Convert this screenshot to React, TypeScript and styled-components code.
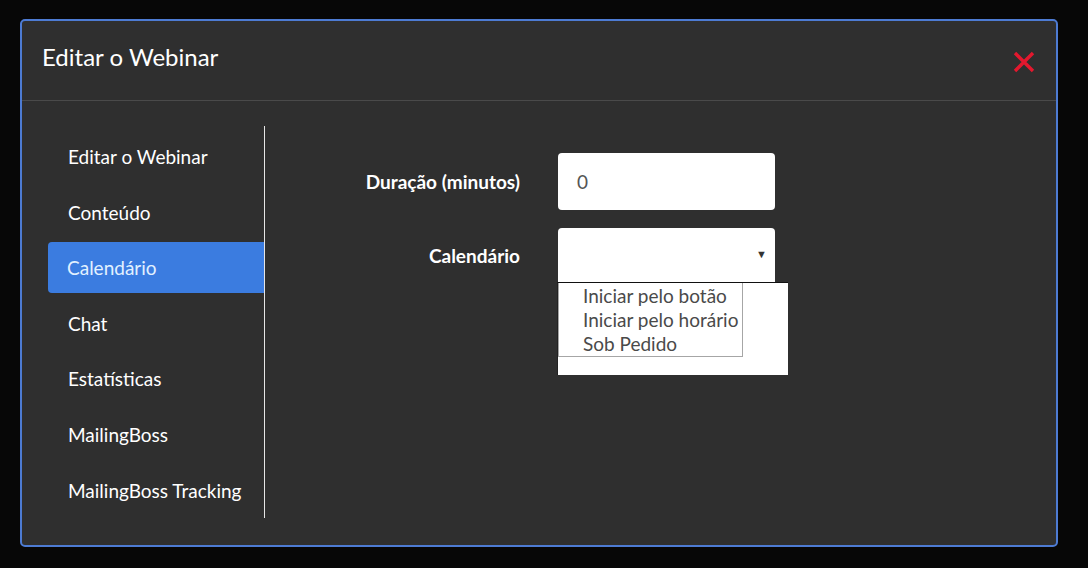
import React from "react";
import styled, { createGlobalStyle } from "styled-components";

const Global = createGlobalStyle`
  html, body { margin: 0; padding: 0; background: #070707; }
  body { font-family: Lato, "Noto Sans", sans-serif; }
  * { box-sizing: border-box; }
`;

const Page = styled.div`
  width: 1088px;
  height: 568px;
  padding: 19px 0 0 20px;
`;

const Modal = styled.div`
  width: 1038px;
  height: 528px;
  background: #2f2f2f;
  border: 2px solid #4d7bd3;
  border-radius: 5px;
  display: flex;
  flex-direction: column;
`;

const Header = styled.div`
  height: 80px;
  border-bottom: 1px solid #4a4a4a;
  display: flex;
  justify-content: space-between;
  align-items: flex-start;
  padding: 20px 20px 0 20px;
`;

const Title = styled.h2`
  margin: 0;
  font-size: 24px;
  font-weight: 400;
  line-height: 32px;
  color: #ffffff;
`;

const Close = styled.button`
  border: 0;
  background: none;
  padding: 0;
  margin-top: 9px;
  width: 24px;
  height: 24px;
  cursor: pointer;
`;

const Body = styled.div`
  flex: 1;
  display: flex;
  align-items: flex-start;
  padding: 25px 0 0 26px;
`;

const Sidebar = styled.nav`
  width: 217px;
  height: 392px;
  border-right: 1px solid #e6e6e6;
  display: flex;
  flex-direction: column;
  gap: 4.6px;
  padding-top: 5px;
`;

const NavItem = styled.div<{ $active?: boolean }>`
  height: 51px;
  display: flex;
  align-items: center;
  padding-left: ${(p) => (p.$active ? "19px" : "20px")};
  font-size: 19px;
  color: ${(p) => (p.$active ? "#e2f1ff" : "#ffffff")};
  background: ${(p) => (p.$active ? "#3b7ce0" : "transparent")};
  border-radius: ${(p) => (p.$active ? "4px 0 0 4px" : "0")};
`;

const Form = styled.div`
  display: grid;
  grid-template-columns: 255px 217px;
  column-gap: 38px;
  row-gap: 18px;
  margin-top: 27px;
  align-items: center;
`;

const Label = styled.label`
  text-align: right;
  font-size: 19px;
  font-weight: 700;
  color: #ffffff;
`;

const Input = styled.div`
  height: 57px;
  background: #ffffff;
  border-radius: 4px;
  display: flex;
  align-items: center;
  padding-left: 19px;
  font-size: 19px;
  color: #555555;
`;

const SelectBox = styled.div`
  position: relative;
  height: 54px;
  background: #ffffff;
  border-radius: 4px 4px 0 0;
`;

const Arrow = styled.span`
  position: absolute;
  right: 8px;
  top: 19px;
  font-size: 11px;
  color: #333333;
`;

const Popup = styled.div`
  position: absolute;
  left: -1px;
  top: 54px;
  width: 231px;
  height: 93px;
  background: #ffffff;
  border-top: 1px solid #111111;
  border-left: 1px solid #222222;
  z-index: 2;
`;

const OptionList = styled.ul`
  list-style: none;
  margin: 0;
  padding: 1px 0 0 0;
  width: 185px;
  height: 74px;
  border: 1px solid #a6a6a6;
  border-top: 0;
`;

const Option = styled.li`
  height: 24px;
  line-height: 24px;
  padding-left: 24px;
  font-size: 19px;
  color: #4a4a4a;
  white-space: nowrap;
`;

const items = [
  "Editar o Webinar",
  "Conteúdo",
  "Calendário",
  "Chat",
  "Estatísticas",
  "MailingBoss",
  "MailingBoss Tracking",
];

export default function App() {
  return (
    <Page>
      <Global />
      <Modal>
        <Header>
          <Title>Editar o Webinar</Title>
          <Close aria-label="Fechar">
            <svg width="24" height="24" viewBox="0 0 24 24">
              <path
                d="M3 3 L21 21 M21 3 L3 21"
                stroke="#e3182e"
                strokeWidth="3.4"
                strokeLinecap="butt"
              />
            </svg>
          </Close>
        </Header>
        <Body>
          <Sidebar>
            {items.map((it) => (
              <NavItem key={it} $active={it === "Calendário"}>
                {it}
              </NavItem>
            ))}
          </Sidebar>
          <Form>
            <Label>Duração (minutos)</Label>
            <Input>0</Input>
            <Label>Calendário</Label>
            <SelectBox>
              <Arrow>▼</Arrow>
              <Popup>
                <OptionList>
                  <Option>Iniciar pelo botão</Option>
                  <Option>Iniciar pelo horário</Option>
                  <Option>Sob Pedido</Option>
                </OptionList>
              </Popup>
            </SelectBox>
          </Form>
        </Body>
      </Modal>
    </Page>
  );
}
